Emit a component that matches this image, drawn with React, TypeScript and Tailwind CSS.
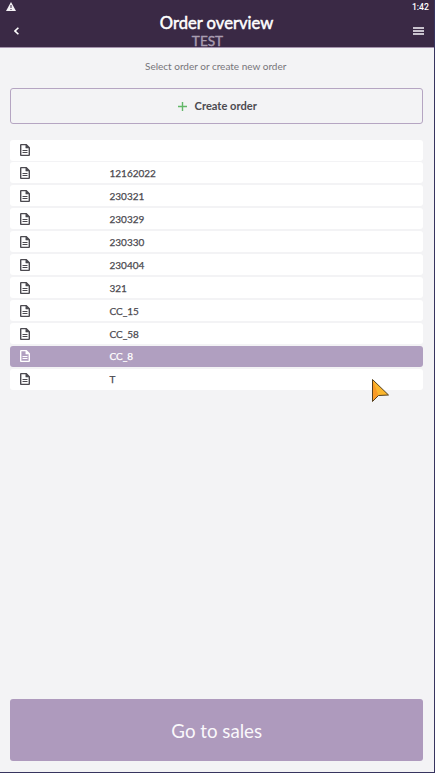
const orders = ['', '12162022', '230321', '230329', '230330', '230404', '321', 'CC_15', 'CC_58', 'CC_8', 'T'];
const selected = 'CC_8';

function DocumentIcon() {
  return (
    <svg width="10" height="12" viewBox="0 0 10 12" fill="none" stroke="currentColor" className="shrink-0">
      <path d="M.7 1.2Q.7.6 1.3.6H6.1L9.3 3.8V10.8Q9.3 11.4 8.7 11.4H1.3Q.7 11.4.7 10.8Z" strokeWidth="1.4" strokeLinejoin="round" />
      <path d="M5.8.6V4.1H9.3Z" fill="currentColor" strokeWidth=".5" />
      <path d="M2.5 6.5H7.5M2.5 8.5H7.5" strokeWidth="1" />
    </svg>
  );
}

function Header() {
  return (
    <header className="flex h-12 shrink-0 flex-col border-b border-[#a594ae] bg-[#3a2945] text-white">
      <div className="flex h-[14px] shrink-0 items-center justify-between pr-[5px] pl-[6px]">
        <svg width="10" height="9" viewBox="0 0 10 9" className="-mt-px">
          <path d="M5 0L10 9H0Z" fill="#f5f2f6" />
          <path d="M5 3V6M5 7V8" stroke="#3a2945" strokeWidth="1" />
        </svg>
        <span className="font-[Roboto,sans-serif] text-[8.7px] leading-[14px] font-medium">1:42</span>
      </div>
      <div className="grid h-[33px] grid-cols-[40px_1fr_40px]">
        <button className="flex items-start pt-[13px] pl-[14px]" aria-label="Back">
          <svg width="5" height="8" viewBox="0 0 5 8" fill="none" stroke="white" strokeWidth="1.6">
            <path d="M4.4.7L1 4L4.4 7.3" />
          </svg>
        </button>
        <div className="flex flex-col items-center">
          <h1 className="ml-[-1px] text-[16.6px] leading-[18px] whitespace-nowrap [-webkit-text-stroke:0.5px_white]">Order overview</h1>
          <div className="ml-[-19px] text-[13.6px] leading-[19px] text-[#a99db1] [-webkit-text-stroke:0.4px_#a99db1]">TEST</div>
        </div>
        <button className="flex items-start pt-[13px] pl-[19px]" aria-label="Menu">
          <svg width="11" height="8" viewBox="0 0 11 8" stroke="#c9c3ce" strokeWidth="1.8">
            <path d="M0 1H11M0 4H11M0 7H11" />
          </svg>
        </button>
      </div>
    </header>
  );
}

export default function App() {
  return (
    <div className="relative flex h-[773px] w-[435px] flex-col overflow-hidden border-r border-b border-[#37345f] bg-[#f3f3f5] font-[Lato,sans-serif] text-[#4c4a50]">
      <Header />
      <main className="flex flex-1 flex-col pr-[11px] pl-[10.4px]">
        <p className="mt-[10px] ml-[-2px] text-center text-[10px] leading-4 text-[#77757a]">Select order or create new order</p>
        <button className="mt-[14px] flex h-9 shrink-0 items-center justify-center gap-[8px] rounded-[3px] border border-[#b5a5c2] pl-px text-[11.1px] font-bold">
          <svg width="9" height="9" viewBox="0 0 9 9" stroke="#62b768" strokeWidth="1.4">
            <path d="M4.5 0V9M0 4.5H9" />
          </svg>
          Create order
        </button>
        <ul className="mt-[15.5px] flex flex-col gap-[1.9px]">
          {orders.map((name) => (
            <li
              key={name}
              className={
                'flex h-[21.05px] items-center rounded-[3px] pl-[9.6px] text-[10px] [-webkit-text-stroke:0.25px_currentColor] ' +
                (name === selected ? 'bg-[#b09fc0] text-white' : 'bg-white')
              }
            >
              <DocumentIcon />
              <span className="mt-px ml-[79.5px]">{name}</span>
            </li>
          ))}
        </ul>
        <button className="mt-auto mb-[11px] h-[62px] shrink-0 rounded-[3px] bg-[#ae9abd] pt-[2px] text-[18.7px] text-[#faf8fb]">Go to sales</button>
      </main>
      <svg width="18" height="24" viewBox="0 0 18 24" className="absolute top-[379px] left-[372px]">
        <path d="M.5.5L16.5 16L6.5 16.5L.5 22.5Z" fill="#fbb62d" />
        <path d="M.5.5L6.5 16.5L.5 22.5Z" fill="#f99a25" />
        <path d="M.5.5L16.5 16L6.5 16.5L.5 22.5Z" fill="none" stroke="#55401f" strokeWidth="1" />
      </svg>
    </div>
  );
}
